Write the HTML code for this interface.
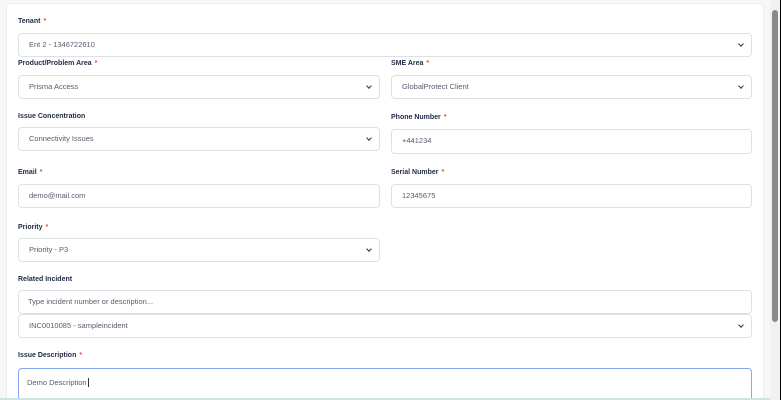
<!DOCTYPE html>
<html style="width:781px;height:400px;overflow:hidden"><head><style>
*{box-sizing:border-box;margin:0;padding:0}
body{width:781px;height:400px;overflow:hidden;background:#f7f7f8;font-family:"Liberation Sans",sans-serif;position:relative}
.card{position:absolute;left:6px;top:3px;width:758px;height:397px;background:#fff;border:1px solid #eceef0;border-bottom:none;border-radius:5px 5px 0 0}
.l{position:absolute;font-size:7px;font-weight:bold;color:#1f2a44}
.l i{color:#d9534f;font-style:normal;margin-left:3px}
.f{position:absolute;height:24px;border:1px solid #dde1e6;border-radius:4px;background:#fff;font-size:7.5px;color:#555d6a;padding:0 10px;line-height:22px}
.s:after{content:"";position:absolute;right:8px;top:8px;width:3px;height:3px;border-right:1.2px solid #333;border-bottom:1.2px solid #333;transform:rotate(45deg)}
.sb{position:absolute;left:770px;top:0;width:11px;height:400px;background:#f1f1f1;border-right:1px solid #000}
.th{position:absolute;left:772px;top:10px;width:6px;height:312px;background:#8a8a8a;border-radius:3px}
</style></head><body>
<div class="card"></div>
<div class="l" style="left:18px;top:18px">Tenant<i>*</i></div>
<div class="f s" style="left:18px;top:33px;width:734px">Ent 2 - 1346722610</div>
<div class="l" style="left:18px;top:60px">Product/Problem Area<i>*</i></div>
<div class="f s" style="left:18px;top:75px;width:362px">Prisma Access</div>
<div class="l" style="left:391px;top:60px">SME Area<i>*</i></div>
<div class="f s" style="left:391px;top:75px;width:361px">GlobalProtect Client</div>
<div class="l" style="left:18px;top:113px">Issue Concentration</div>
<div class="f s" style="left:18px;top:127px;width:362px">Connectivity Issues</div>
<div class="l" style="left:391px;top:114px">Phone Number<i>*</i></div>
<div class="f" style="left:391px;top:129px;width:361px;height:25px">+441234</div>
<div class="l" style="left:18px;top:169px">Email<i>*</i></div>
<div class="f" style="left:18px;top:184px;width:362px">demo@mail.com</div>
<div class="l" style="left:391px;top:169px">Serial Number<i>*</i></div>
<div class="f" style="left:391px;top:184px;width:361px">12345675</div>
<div class="l" style="left:18px;top:224px">Priority<i>*</i></div>
<div class="f s" style="left:18px;top:238px;width:362px">Priority - P3</div>
<div class="l" style="left:18px;top:276px">Related Incident</div>
<div class="f" style="left:18px;top:290px;width:734px;padding-left:9px">Type incident number or description...</div>
<div class="f s" style="left:18px;top:314px;width:734px">INC0010085 - sampleincident</div>
<div class="l" style="left:18px;top:352px">Issue Description<i>*</i></div>
<div class="f" style="left:18px;top:368px;width:734px;height:40px;border-color:#86a8f0;padding:8px 8px;line-height:12px">Demo Description<span style="border-left:1px solid #333;margin-left:1px"></span></div>
<div style="position:absolute;left:0;top:398px;width:770px;height:2px;background:#cfe3e3"></div>
<div class="sb"></div><div class="th"></div>
</body></html>
